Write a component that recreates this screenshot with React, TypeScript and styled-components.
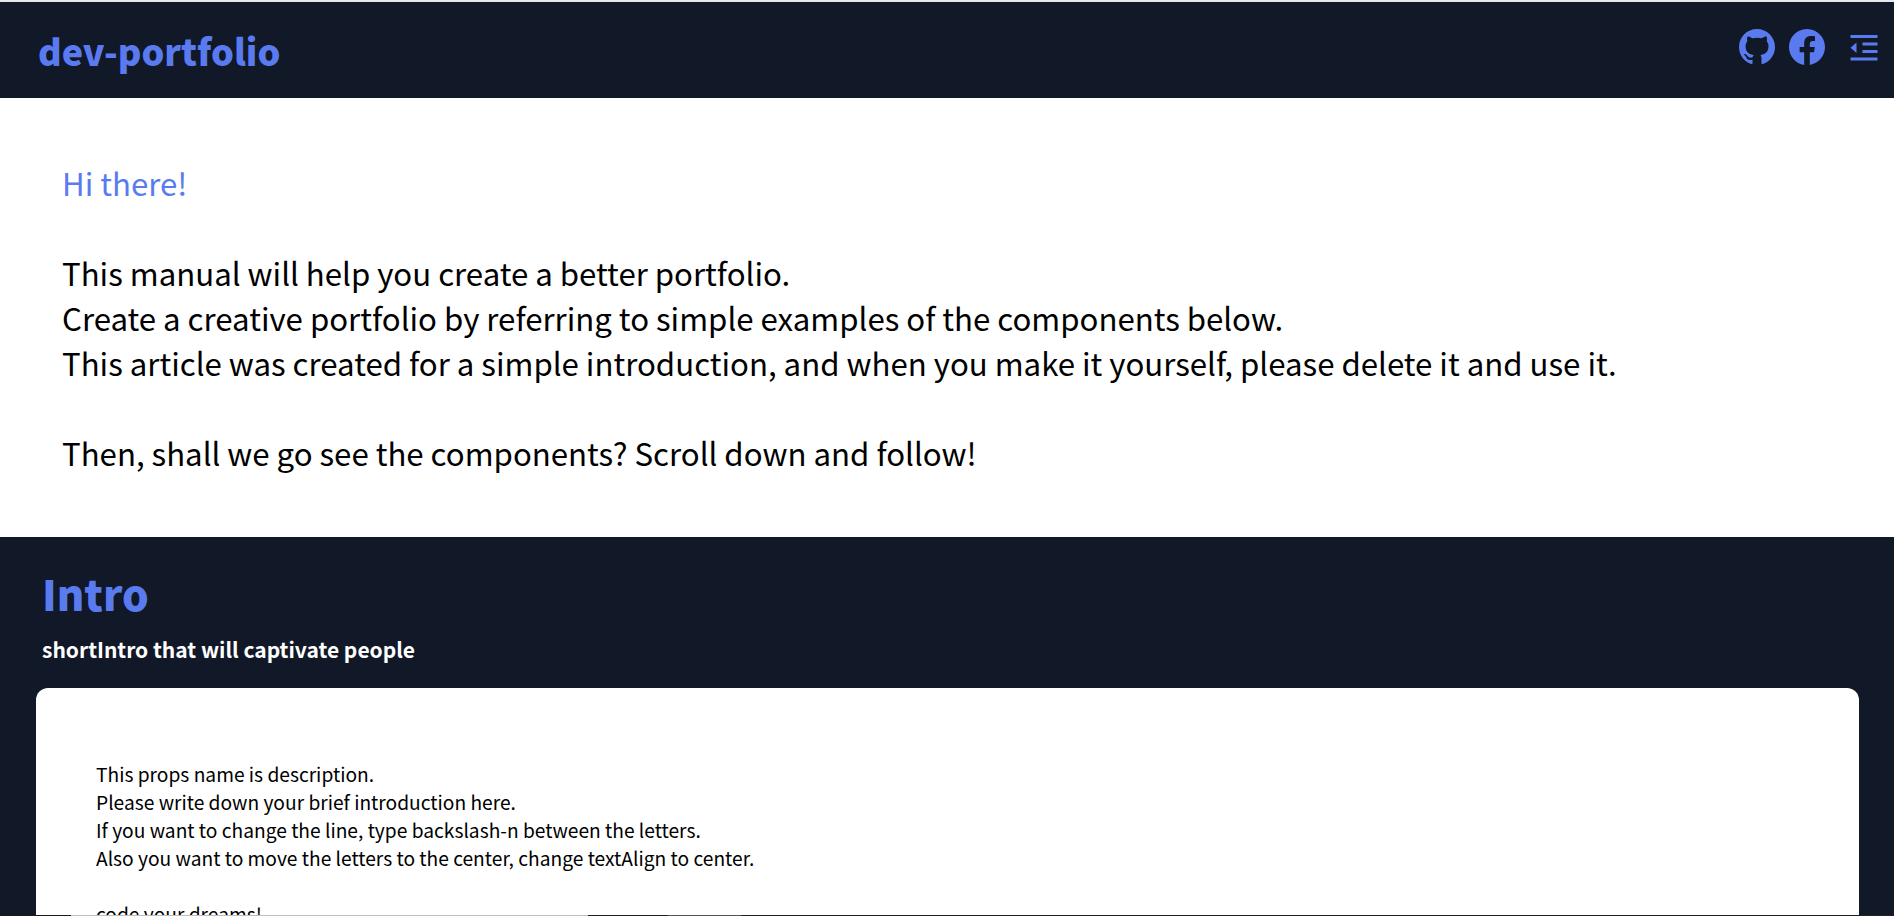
import React from "react";
import styled, { createGlobalStyle } from "styled-components";
import { BsFacebook, BsGithub } from "react-icons/bs";
import { RiIndentDecrease } from "react-icons/ri";

const GlobalStyle = createGlobalStyle`
  html, body {
    margin: 0;
    height: 916px;
    overflow: hidden;
    background: #fff;
  }
  * {
    box-sizing: border-box;
  }
  body {
    font-family: "Noto Sans CJK KR", "Noto Sans", sans-serif;
  }
`;

const Page = styled.div`
  height: 916px;
  display: flex;
  flex-direction: column;
  overflow: hidden;
  border-top: 2px solid #e5e7eb;
`;
const Header = styled.header`
  flex: none;
  height: 96px;
  padding: 0 12px 0 38px;
  display: flex;
  align-items: center;
  justify-content: space-between;
  background: #111827;
`;
const Logo = styled.h1`
  margin: 0;
  font-size: 36px;
  font-weight: 900;
  color: #5a7bef;
`;
const Icons = styled.nav`
  display: flex;
  align-items: center;
  gap: 14px;
  margin-bottom: 6px;
  color: #5a7bef;
`;
const MenuButton = styled.span`
  display: flex;
  margin-left: 7px;
`;
const Welcome = styled.section`
  flex: none;
  height: 439px;
  padding: 62px 62px 0;
  font-size: 31.2px;
  line-height: 45px;
  color: #000;
`;
const Greeting = styled.p`
  margin: 0 0 45px;
  color: #5a7bef;
`;
const Paragraph = styled.p`
  margin: 0 0 45px;
`;
const IntroSection = styled.section`
  flex: 1;
  min-height: 0;
  overflow: hidden;
  padding: 24px 35px 0 36px;
  background: #111827;
`;
const SectionTitle = styled.h2`
  margin: 0 0 8px 6px;
  font-size: 42px;
  line-height: 64px;
  font-weight: 900;
  color: #5a7bef;
`;
const SectionSub = styled.p`
  margin: 0 0 23px 6px;
  font-size: 21px;
  line-height: 32px;
  font-weight: 700;
  color: #fff;
`;
const Card = styled.div`
  height: 400px;
  padding: 72px 60px;
  border-radius: 12px;
  background: #fff;
  font-size: 19.2px;
  line-height: 28px;
  color: #000;
`;
// the 1px edge along the bottom of the window
const BottomEdge = styled.div`
  flex: none;
  height: 1px;
  background: linear-gradient(
    to right,
    #1a1a1a 0 71px,
    #bdbdbd 71px 588px,
    #222 588px 668px,
    #555 668px 741px,
    #222 741px
  );
`;

export default function App() {
  return (
    <>
      <GlobalStyle />
      <Page>
        <Header>
          <Logo>dev-portfolio</Logo>
          <Icons>
            <BsGithub size={36} />
            <BsFacebook size={36} />
            <MenuButton>
              <RiIndentDecrease size={36} />
            </MenuButton>
          </Icons>
        </Header>
        <Welcome>
          <Greeting>Hi there!</Greeting>
          <Paragraph>
            This manual will help you create a better portfolio.
            <br />
            Create a creative portfolio by referring to simple examples of the components below.
            <br />
            This article was created for a simple introduction, and when you make it yourself, please delete it and use it.
          </Paragraph>
          <Paragraph>Then, shall we go see the components? Scroll down and follow!</Paragraph>
        </Welcome>
        <IntroSection>
          <SectionTitle>Intro</SectionTitle>
          <SectionSub>shortIntro that will captivate people</SectionSub>
          <Card>
            This props name is description.
            <br />
            Please write down your brief introduction here.
            <br />
            If you want to change the line, type backslash-n between the letters.
            <br />
            Also you want to move the letters to the center, change textAlign to center.
            <br />
            <br />
            code your dreams!
          </Card>
        </IntroSection>
        <BottomEdge />
      </Page>
    </>
  );
}
